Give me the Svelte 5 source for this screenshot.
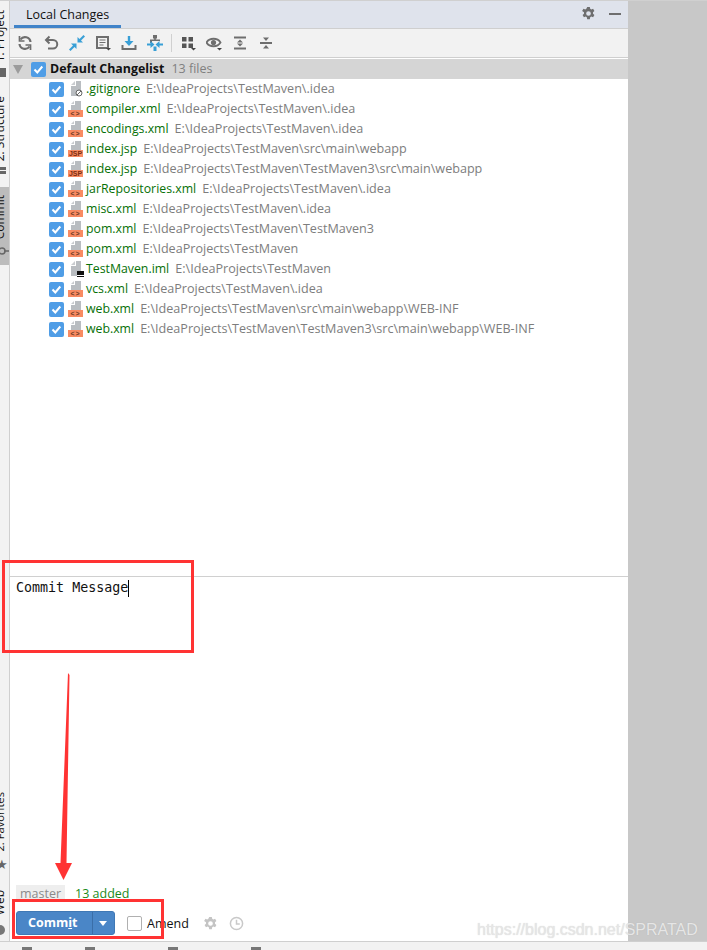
<script lang="ts">
	const P = 'E:\\IdeaProjects\\TestMaven';
	const files = [
		{ name: '.gitignore', path: P + '\\.idea', kind: 'ignore' },
		{ name: 'compiler.xml', path: P + '\\.idea', kind: 'xml' },
		{ name: 'encodings.xml', path: P + '\\.idea', kind: 'xml' },
		{ name: 'index.jsp', path: P + '\\src\\main\\webapp', kind: 'jsp' },
		{ name: 'index.jsp', path: P + '\\TestMaven3\\src\\main\\webapp', kind: 'jsp' },
		{ name: 'jarRepositories.xml', path: P + '\\.idea', kind: 'xml' },
		{ name: 'misc.xml', path: P + '\\.idea', kind: 'xml' },
		{ name: 'pom.xml', path: P + '\\TestMaven3', kind: 'xml' },
		{ name: 'pom.xml', path: P, kind: 'xml' },
		{ name: 'TestMaven.iml', path: P, kind: 'iml' },
		{ name: 'vcs.xml', path: P + '\\.idea', kind: 'xml' },
		{ name: 'web.xml', path: P + '\\src\\main\\webapp\\WEB-INF', kind: 'xml' },
		{ name: 'web.xml', path: P + '\\TestMaven3\\src\\main\\webapp\\WEB-INF', kind: 'xml' }
	];
</script>

{#snippet check()}
	<svg class="check" width="15" height="15" viewBox="0 0 15 15">
		<rect width="15" height="15" rx="2" fill="#4f9de6" />
		<path d="M3.500 7.500l2.800 3 5-6" fill="none" stroke="#fff" stroke-width="2" />
	</svg>
{/snippet}

{#snippet caret()}
	<path d="M11 13h5l-2.500 2.500z" fill="#444" />
{/snippet}

{#snippet gear(color: string)}
	<svg width="15" height="15" viewBox="0 0 16 16">
		<path fill={color} fill-rule="evenodd" d="M6.600 1h2.800l.4 2 1.200.7 1.900-.7 1.400 2.400-1.500 1.300v1.600l1.500 1.300-1.400 2.400-1.900-.7-1.200.7-.4 2H6.600l-.4-2-1.200-.7-1.900.7-1.400-2.400 1.500-1.300V6.700L1.200 5.400l1.400-2.400 1.900.7 1.200-.7zM8 5.500a2.500 2.500 0 1 0 0 5 2.500 2.500 0 0 0 0-5z" />
	</svg>
{/snippet}

<div class="screen">
	<div class="main">
		<aside class="strip">
			<div class="strip-group">
				<div class="side-tab first"><span class="vtext">1: Project</span><i class="side-icon"></i></div>
				<div class="side-tab second"><span class="vtext">2: Structure</span><i class="side-icon small"></i></div>
				<div class="side-tab active">
					<span class="vtext">Commit</span>
					<svg width="9" height="12" viewBox="0 0 9 12"><circle cx="2" cy="6" r="3" fill="none" stroke="#666" stroke-width="1.500" /><path d="M4 6h5" stroke="#666" stroke-width="1.500" /></svg>
				</div>
			</div>
			<div class="strip-group">
				<div class="side-tab fav"><span class="vtext">2: Favorites</span><span class="star">★</span></div>
				<div class="side-tab web"><span class="vtext">Web</span><i class="side-round"></i></div>
			</div>
		</aside>

		<section class="panel">
			<header class="tabs">
				<div class="tab">Local Changes</div>
				<div class="tab-actions">
					{@render gear('#6e6e6e')}
					<i class="minimize"></i>
				</div>
			</header>

			<div class="toolbar">
				<button aria-label="Refresh"><svg width="16" height="16" viewBox="0 0 16 16" fill="none" stroke="#6e6e6e" stroke-width="2.200"><path d="M13.500 7A5.500 5.500 0 0 0 3.500 4.500" /><path d="M2.500 9A5.500 5.500 0 0 0 12.500 11.500" /><path d="M2.500 1v5H7.500M13.500 15v-5H8.500" stroke-width="1.700" /></svg></button>
				<button aria-label="Rollback"><svg width="16" height="16" viewBox="0 0 16 16" fill="none" stroke="#6e6e6e" stroke-width="2"><path d="M3 5h7a4 4 0 0 1 0 8.500H5" /><path d="M6.500 1.500L3 5l3.500 3.500" /></svg></button>
				<button aria-label="Show diff"><svg width="16" height="16" viewBox="0 0 16 16" fill="#389fd6"><path d="M0 14.500l4-4L2 8.500h5.500V14l-2-2-4 4zM16 1.500l-4 4 2 2H8.500V2l2 2 4-4z" /></svg></button>
				<button aria-label="Changelist"><svg width="16" height="16" viewBox="0 0 16 16"><path d="M2 2h11v11H2z" fill="none" stroke="#6e6e6e" stroke-width="2" /><path d="M4.500 5h6M4.500 7.500h6M4.500 10h4" stroke="#6e6e6e" />{@render caret()}</svg></button>
				<button aria-label="Shelve"><svg width="16" height="16" viewBox="0 0 16 16"><path d="M8 1v7" stroke="#389fd6" stroke-width="2.400" /><path d="M3.500 6h9L8 11z" fill="#389fd6" /><path d="M1.500 10v4h13v-4" fill="none" stroke="#6e6e6e" stroke-width="2" /></svg></button>
				<button aria-label="Group"><svg width="16" height="16" viewBox="0 0 16 16"><path d="M6 0h4v3.500H6zM7.200 3h1.600v2H7.200zM3 4.500h10v1.500H3z" fill="#6e6e6e" /><path d="M3 6v2h2V6z" fill="#6e6e6e" /><path d="M0 8.500h3.500V6L7.500 9.500l-4 3.500v-2.500H0zM16 8.500h-3.500V6L8.500 9.500l4 3.500v-2.500H16zM6.500 11.500h3V16h-3z" fill="#389fd6" /></svg></button>
				<span class="sep"></span>
				<button aria-label="Group by"><svg width="16" height="16" viewBox="0 0 16 16" fill="#555"><path d="M2 2h4.500v4.500H2zM8.500 2H13v4.500H8.500zM2 8.500h4.500V13H2zM8.500 8.500H13V13H8.500z" />{@render caret()}</svg></button>
				<button aria-label="View"><svg width="16" height="16" viewBox="0 0 16 16"><path d="M.5 7.500C3.500 2.500 11.500 2.500 14.500 7.500 11.500 12.500 3.500 12.500.5 7.500z" fill="none" stroke="#6e6e6e" stroke-width="1.800" /><circle cx="7.500" cy="7.500" r="2.600" fill="#6e6e6e" />{@render caret()}</svg></button>
				<button aria-label="Expand all"><svg width="16" height="16" viewBox="0 0 16 16" fill="#6e6e6e"><path d="M2 1.500h12v2H2zM2 12.500h12v2H2zM8 4.500L11 7.500H5zM8 11.500L5 8.500h6z" /></svg></button>
				<button aria-label="Collapse all"><svg width="16" height="16" viewBox="0 0 16 16" fill="#6e6e6e"><path d="M2 7h12v2H2zM8 6L5 2.500h6zM8 10l3 3.500H5z" /></svg></button>
			</div>

			<div class="list-head">
				<span class="twisty"></span>
				{@render check()}
				<strong>Default Changelist</strong>
				<span class="count">13 files</span>
			</div>

			<ul class="list">
				{#each files as f}
					<li>
						{@render check()}
						<span class="file-icon">
							{#if f.kind === 'xml' || f.kind === 'jsp'}
								<svg class="doc" width="10" height="9" viewBox="0 0 10 9"><path d="M0 9V4h4V0h6v9z" fill="#b9bdc1" /><path d="M0 3l3-3v3z" fill="#c9cccf" /></svg>
							{:else}
								<svg class="doc" width="10" height="15" viewBox="0 0 10 15"><path d="M0 15V5h5V0h5v15z" fill="#b9bdc1" /><path d="M0 4l4-4v4z" fill="#c9cccf" /></svg>
							{/if}
							{#if f.kind === 'xml'}
								<span class="badge">&lt;&gt;</span>
							{:else if f.kind === 'jsp'}
								<span class="badge jsp">JSP</span>
							{:else if f.kind === 'ignore'}
								<svg class="overlay" width="8" height="8" viewBox="0 0 8 8"><circle cx="4" cy="4" r="3" fill="#fff" stroke="#666" /><path d="M2 6l4-4" stroke="#666" /></svg>
							{:else}
								<i class="iml"></i>
							{/if}
						</span>
						<span class="name">{f.name}</span>
						<span class="path">{f.path}</span>
					</li>
				{/each}
			</ul>

			<div class="message">
				<span class="msg-text">Commit Message</span><span class="cursor"></span>
			</div>

			<footer class="commit-area">
				<div class="status">
					<span class="branch">master</span>
					<span class="added">13 added</span>
				</div>
				<div class="actions">
					<div class="commit-btn">
						<span class="commit-label">Comm<u>i</u>t</span>
						<span class="commit-drop"></span>
					</div>
					<span class="box"></span>
					<span class="amend">Amend</span>
					<span class="tool">{@render gear('#c4c4c4')}</span>
					<svg class="tool clock" width="15" height="15" viewBox="0 0 16 16" fill="none" stroke="#c9c9c9" stroke-width="1.600"><circle cx="8" cy="8" r="6.500" /><path d="M8 4v4.500h3.500" /></svg>
				</div>
			</footer>
		</section>

		<div class="gutter"></div>
	</div>

	<div class="status-bar">
		<i></i><i></i><i></i><i></i>
	</div>

	<!-- hand drawn annotations on top of the screenshot -->
	<div class="mark mark-message"></div>
	<div class="mark mark-commit"></div>
	<svg class="arrow" width="20" height="212" viewBox="0 0 20 212"><path d="M14 0L15.500 2 12.500 190H18L9.500 207 1 190H6.500z" fill="#f33" /></svg>
	<span class="watermark">https://blog.csdn.net/SPRATAD</span>
</div>

<style>
	:global(body) {
		margin: 0;
		background: #fff;
	}

	.screen {
		position: relative;
		width: 707px;
		height: 950px;
		overflow: hidden;
		font-family: 'Open Sans', 'Liberation Sans', sans-serif;
		font-size: 12.5px;
		color: #111;
	}

	.main {
		display: flex;
		height: 941px;
		box-sizing: border-box;
		border-top: 1px solid #d0d0d0;
	}

	/* left tool window strip */
	.strip {
		width: 9px;
		flex: none;
		display: flex;
		flex-direction: column;
		justify-content: space-between;
		overflow: hidden;
		background: #f2f2f2;
		border-right: 1px solid #cfcfcf;
	}

	.strip-group {
		display: flex;
		flex-direction: column;
	}

	.side-tab {
		display: flex;
		flex-direction: column;
		align-items: center;
		width: 9px;
		gap: 6px;
		font-size: 12px;
		line-height: 12px;
	}

	.side-tab.first {
		height: 95px;
		padding-top: 9px;
		box-sizing: border-box;
	}

	.side-tab.second {
		height: 91px;
		box-sizing: border-box;
	}

	.side-tab.active {
		height: 78px;
		padding-top: 8px;
		box-sizing: border-box;
		background: #bcbcbc;
	}

	.side-tab.fav {
		font-size: 11.2px;
	}

	.side-tab.web {
		margin-top: 20px;
		margin-bottom: 6px;
		gap: 10px;
	}

	.vtext {
		writing-mode: vertical-rl;
		transform: rotate(180deg);
		white-space: nowrap;
		margin-left: -9px;
	}

	.side-icon {
		width: 6px;
		height: 9px;
		background: #666;
		margin-left: -3px;
	}

	.side-icon.small {
		height: 8px;
		background: repeating-linear-gradient(#666 0 3px, transparent 3px 4px);
	}

	.star {
		font-size: 13px;
		line-height: 12px;
		color: #666;
		margin-left: -5px;
	}

	.side-round {
		width: 10px;
		height: 10px;
		flex: none;
		border-radius: 50%;
		background: #777;
		margin-left: -9px;
	}

	.panel {
		width: 618px;
		flex: none;
		display: flex;
		flex-direction: column;
		background: #fff;
	}

	.tabs {
		display: flex;
		justify-content: space-between;
		align-items: center;
		height: 28px;
		box-sizing: border-box;
		background: #dfe3ec;
		border-bottom: 1px solid #cfcfcf;
		padding-left: 4px;
	}

	.tab {
		display: flex;
		align-items: center;
		height: 27px;
		box-sizing: border-box;
		padding: 2px 12px 0;
		border-bottom: 3px solid #4083c9;
	}

	.tab-actions {
		display: flex;
		align-items: center;
		gap: 13px;
		padding-right: 7px;
		padding-bottom: 2px;
	}

	.minimize {
		width: 12px;
		height: 2px;
		background: #6e6e6e;
	}

	.toolbar {
		display: flex;
		align-items: center;
		height: 28px;
		padding-left: 2px;
		background: #f2f2f2;
		border-bottom: 1px solid #cfcfcf;
	}

	.toolbar button {
		width: 26px;
		height: 26px;
		padding: 0;
		border: 0;
		background: none;
		display: flex;
		align-items: center;
		justify-content: center;
	}

	.sep {
		width: 1px;
		height: 18px;
		margin: 0 3px;
		background: #d0d0d0;
	}

	.list-head {
		display: flex;
		align-items: center;
		height: 20px;
		margin-top: 1px;
		background: #d5d5d5;
	}

	.twisty {
		width: 0;
		height: 0;
		margin-left: 3px;
		border-style: solid;
		border-width: 9px 5px 0;
		border-color: #9c9c9c transparent transparent;
	}

	.list-head .check {
		margin-left: 8px;
	}

	.list-head strong {
		margin-left: 4px;
		padding-bottom: 2px;
		font-weight: 700;
		font-size: 12.4px;
	}

	.count {
		margin-left: 7px;
		padding-bottom: 2px;
		color: #808080;
	}

	.list {
		flex: 1;
		margin: 0;
		padding: 0;
		list-style: none;
	}

	.list li {
		display: flex;
		align-items: center;
		height: 20px;
		padding-left: 39px;
		white-space: nowrap;
	}

	.file-icon {
		position: relative;
		width: 16px;
		height: 16px;
		margin: 0 2px 0 4px;
		flex: none;
	}

	.doc {
		position: absolute;
		left: 3px;
		top: 0;
	}

	.badge {
		position: absolute;
		left: 0;
		bottom: 0;
		width: 15px;
		height: 7px;
		background: #f98b62;
		color: #6b3a24;
		font: 700 7px/7px 'Liberation Sans', sans-serif;
		letter-spacing: 1px;
		text-align: center;
	}

	.badge.jsp {
		letter-spacing: 0;
		color: #7a2d10;
	}

	.overlay {
		position: absolute;
		right: 1px;
		bottom: 0;
	}

	.iml {
		position: absolute;
		right: 0;
		bottom: 0;
		width: 7px;
		height: 6px;
		background: linear-gradient(#111 4px, #fff 4px 5px, #111 5px);
	}

	.name {
		padding-bottom: 2px;
		font-size: 12.3px;
		color: #067006;
	}

	.path {
		margin-left: 6px;
		padding-bottom: 2px;
		font-size: 12.6px;
		color: #7d7d7d;
	}

	.message {
		height: 309px;
		box-sizing: border-box;
		padding: 3px 0 0 6px;
		border-top: 1px solid #d0d0d0;
		display: flex;
		align-items: flex-start;
		font: 13.33px/16px 'DejaVu Sans Mono', monospace;
		color: #111;
	}

	.cursor {
		width: 1px;
		height: 17px;
		background: #000;
	}

	.commit-area {
		display: flex;
		flex-direction: column;
		height: 56px;
		padding-left: 6px;
	}

	.status {
		display: flex;
		align-items: center;
		gap: 10px;
		height: 17px;
	}

	.branch {
		padding: 0 4px;
		line-height: 17px;
		background: #eee;
		color: #8a8a8a;
	}

	.added {
		color: #1a8a1a;
	}

	.actions {
		display: flex;
		align-items: center;
		height: 24px;
		margin-top: 9px;
	}

	.commit-btn {
		display: flex;
		width: 99px;
		height: 24px;
		box-sizing: border-box;
		border: 1px solid #3f78b5;
		border-radius: 3px;
		background: #4a86c7;
		color: #fff;
	}

	.commit-label {
		width: 76px;
		flex: none;
		box-sizing: border-box;
		padding-left: 11px;
		font-weight: 700;
		line-height: 22px;
		border-right: 1px solid #3a6ea8;
	}

	.commit-drop {
		width: 0;
		height: 0;
		margin: 9px 0 0 6px;
		border-style: solid;
		border-width: 5px 4.5px 0;
		border-color: #fff transparent transparent;
	}

	.box {
		width: 13px;
		height: 13px;
		margin-left: 12px;
		border: 1px solid #b0b0b0;
		border-radius: 2px;
		background: #fff;
	}

	.amend {
		margin-left: 5px;
		width: 40px;
	}

	.tool {
		display: flex;
		margin-left: 16px;
	}

	.tool.clock {
		margin-left: 11px;
	}

	.gutter {
		flex: 1;
		background: #c8c8c8;
	}

	.status-bar {
		display: flex;
		align-items: flex-start;
		gap: 73px;
		height: 9px;
		box-sizing: border-box;
		padding: 5px 0 0 22px;
		background: #f2f2f2;
		border-top: 1px solid #cfcfcf;
	}

	.status-bar i {
		width: 10px;
		height: 4px;
		background: #777;
	}

	.status-bar i:first-child {
		margin-right: -20px;
	}

	/* annotations */
	.mark {
		position: absolute;
		box-sizing: border-box;
		border: 3px solid #f33;
	}

	.mark-message {
		left: 2px;
		top: 560px;
		width: 192px;
		height: 93px;
	}

	.mark-commit {
		left: 12px;
		top: 899px;
		width: 152px;
		height: 40px;
	}

	.arrow {
		position: absolute;
		left: 54px;
		top: 673px;
	}

	.watermark {
		position: absolute;
		left: 477px;
		top: 921px;
		font: 16px/18px 'Liberation Sans', sans-serif;
		color: #e6e6e6;
		text-shadow: 0 0 1px rgba(120, 120, 120, 0.3);
		white-space: nowrap;
	}
</style>
